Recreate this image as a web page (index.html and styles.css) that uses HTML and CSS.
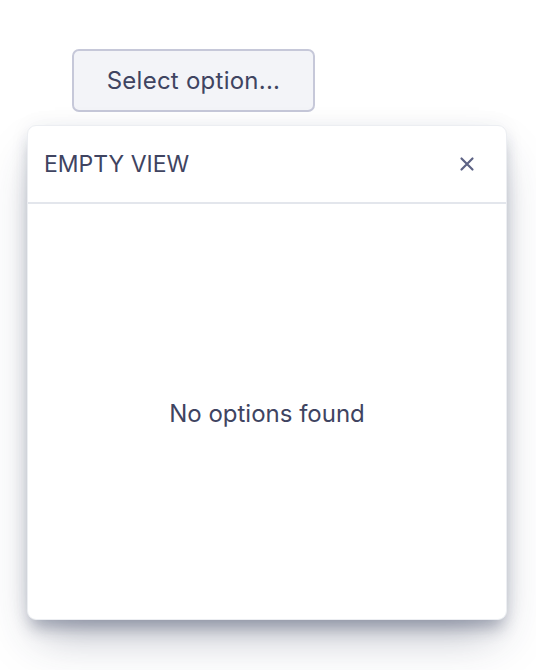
FILE: index.html
```html
<!DOCTYPE html>
<html>
<head>
<meta charset="utf-8">
<link rel="stylesheet" href="styles.css">
</head>
<body>
<div class="page">
  <button class="trigger">Select option...</button>
  <div class="panel">
    <div class="panel-header">
      <span class="panel-title">EMPTY VIEW</span>
      <span class="close" aria-label="Close">
        <svg width="16" height="16" viewBox="0 0 16 16"><path d="M2.5 2.5 L13.5 13.5 M13.5 2.5 L2.5 13.5" stroke="#5d6385" stroke-width="2.2" stroke-linecap="round" fill="none"/></svg>
      </span>
    </div>
    <div class="panel-body">No options found</div>
  </div>
</div>
</body>
</html>
```

FILE: styles.css
```css
html, body {
  margin: 0;
  padding: 0;
  background: #ffffff;
}
body {
  font-family: Inter, "Noto Sans", sans-serif;
  color: #3f4461;
}
.page {
  box-sizing: border-box;
  height: 670px;
  padding: 49px 0 0 27px;
  display: flex;
  flex-direction: column;
  align-items: flex-start;
}
.trigger {
  margin-left: 45px;
  width: 243px;
  height: 63px;
  box-sizing: border-box;
  border: 2px solid #c6c8d9;
  border-radius: 7px;
  background: #f3f4f8;
  font-family: Inter, "Noto Sans", sans-serif;
  font-size: 24px;
  letter-spacing: 0.25px;
  color: #3f4461;
  padding: 0 0 1px 0;
}
.panel {
  margin-top: 13px;
  width: 480px;
  height: 495px;
  flex: none;
  box-sizing: border-box;
  border: 1px solid #eceef2;
  border-radius: 9px;
  background: #fff;
  box-shadow: 0 25px 45px -12px rgba(40, 50, 80, 0.35), 0 12px 16px -4px rgba(40, 50, 80, 0.3), 0 0 20px rgba(40, 50, 80, 0.06);
  display: flex;
  flex-direction: column;
}
.panel-header {
  height: 78px;
  box-sizing: border-box;
  border-bottom: 2px solid #e3e6ec;
  display: flex;
  align-items: center;
  justify-content: space-between;
  padding: 0 31px 0 16px;
}
.panel-title {
  font-size: 23px;
  color: #3f4461;
}
.close {
  display: flex;
  width: 16px;
  height: 16px;
}
.panel-body {
  flex: 1;
  display: flex;
  align-items: center;
  justify-content: center;
  font-size: 24px;
  color: #3f4461;
  padding-top: 4px;
}
```
